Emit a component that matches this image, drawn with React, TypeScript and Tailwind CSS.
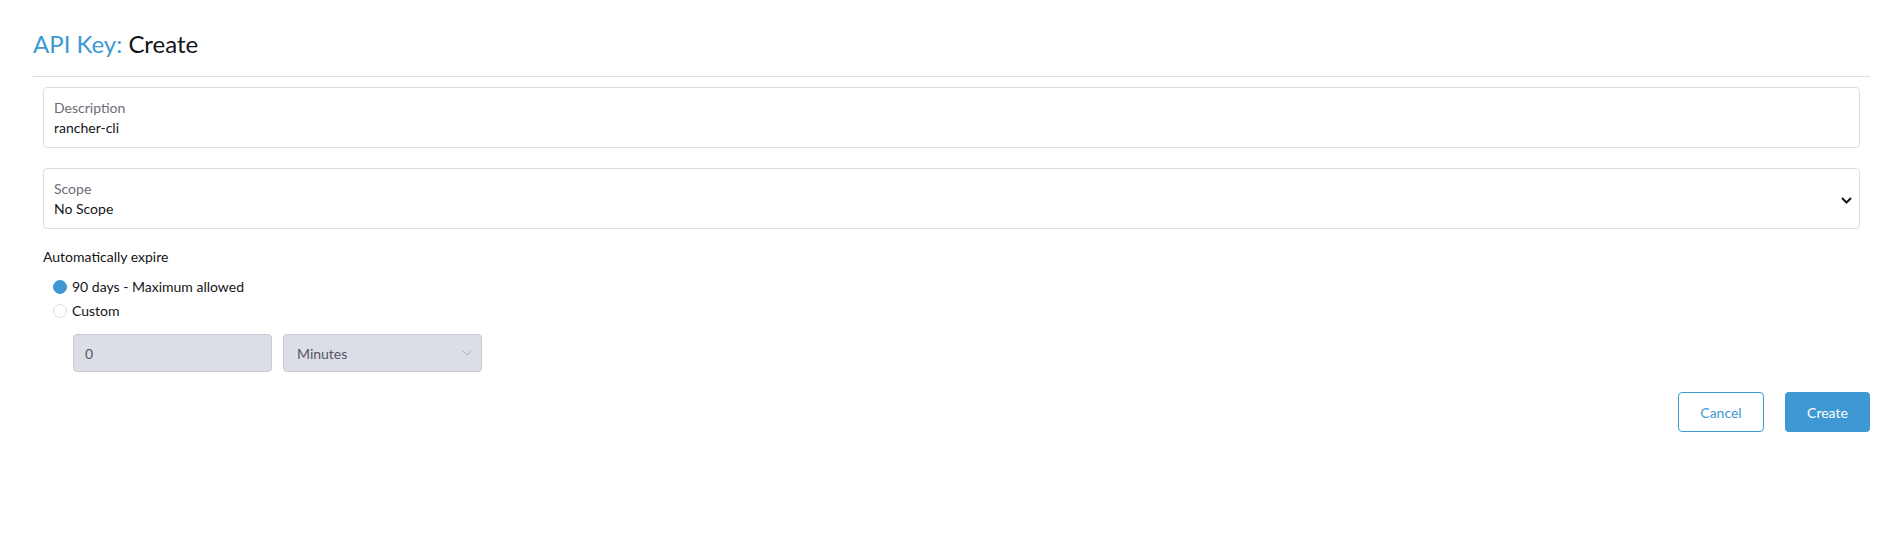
import { useState } from "react";

const BLUE = "text-[#3d98d3]";

function LabeledBox({ label, value, select }: { label: string; value: string; select?: boolean }) {
  return (
    <div className="relative flex h-[61px] flex-col justify-center rounded-[4px] border border-[#dcdee7] bg-white px-[10px]">
      <span className="text-[14px] leading-[20px] text-[#6c6c76]">{label}</span>
      <span className="text-[14px] leading-[20px] text-[#141419]">{value}</span>
      {select && (
        <svg
          className="absolute right-[7px] top-[28px]"
          width="11"
          height="7"
          viewBox="0 0 11 7"
          fill="none"
        >
          <path d="M1 1l4.5 4.5L10 1" stroke="#141419" strokeWidth="2" />
        </svg>
      )}
    </div>
  );
}

function Radio({ checked, label, onClick }: { checked: boolean; label: string; onClick: () => void }) {
  return (
    <label onClick={onClick} className="flex h-[24px] cursor-pointer items-center gap-[5px] pl-[10px]">
      <span
        className={
          checked
            ? "h-[14px] w-[14px] rounded-full border border-[#3d98d3] bg-[#3d98d3]"
            : "h-[14px] w-[14px] rounded-full border border-[#dcdee7] bg-white"
        }
      />
      <span className="text-[14px] leading-[20px] text-[#141419]">{label}</span>
    </label>
  );
}

export default function App() {
  const [expire, setExpire] = useState("max");

  return (
    <div className="min-h-screen bg-white px-[33px] pt-[29px] font-['Lato','Noto_Sans',sans-serif]">
      <h1 className="text-[24px] leading-[30px]">
        <span className={BLUE}>API Key:</span> <span className="text-[#141419]">Create</span>
      </h1>
      <div className="mt-[17px] border-t border-[#dcdee7]" />

      <div className="px-[10px] pt-[10px]">
        <LabeledBox label="Description" value="rancher-cli" />
        <div className="mt-[20px]">
          <LabeledBox label="Scope" value="No Scope" select />
        </div>

        <div className="mt-[18px] text-[14px] leading-[20px] text-[#141419]">Automatically expire</div>
        <div className="mt-[8px] flex flex-col">
          <Radio checked={expire === "max"} label="90 days - Maximum allowed" onClick={() => setExpire("max")} />
          <Radio checked={expire === "custom"} label="Custom" onClick={() => setExpire("custom")} />
        </div>

        <div className="ml-[30px] mt-[11px] flex gap-[11px]">
          <div className="flex h-[38px] w-[199px] items-center rounded-[4px] border border-[#c7c9d3] bg-[#dcdee7] px-[11px] text-[14px] text-[#555562]">
            0
          </div>
          <div className="flex h-[38px] w-[199px] items-center justify-between rounded-[4px] border border-[#c7c9d3] bg-[#dcdee7] pl-[13px] pr-[9px] text-[14px] text-[#555562]">
            <span>Minutes</span>
            <svg width="10" height="6" viewBox="0 0 10 6" fill="none">
              <path d="M1 1l4 4 4-4" stroke="#a9abb6" strokeWidth="1" />
            </svg>
          </div>
        </div>
      </div>

      <div className="mt-[20px] flex justify-end gap-[21px]">
        <button className="h-[40px] w-[86px] rounded-[4px] border border-[#3d98d3] bg-white text-[14px] text-[#3d98d3]">
          Cancel
        </button>
        <button className="h-[40px] w-[85px] rounded-[4px] bg-[#3d98d3] text-[14px] text-white">
          Create
        </button>
      </div>
    </div>
  );
}
